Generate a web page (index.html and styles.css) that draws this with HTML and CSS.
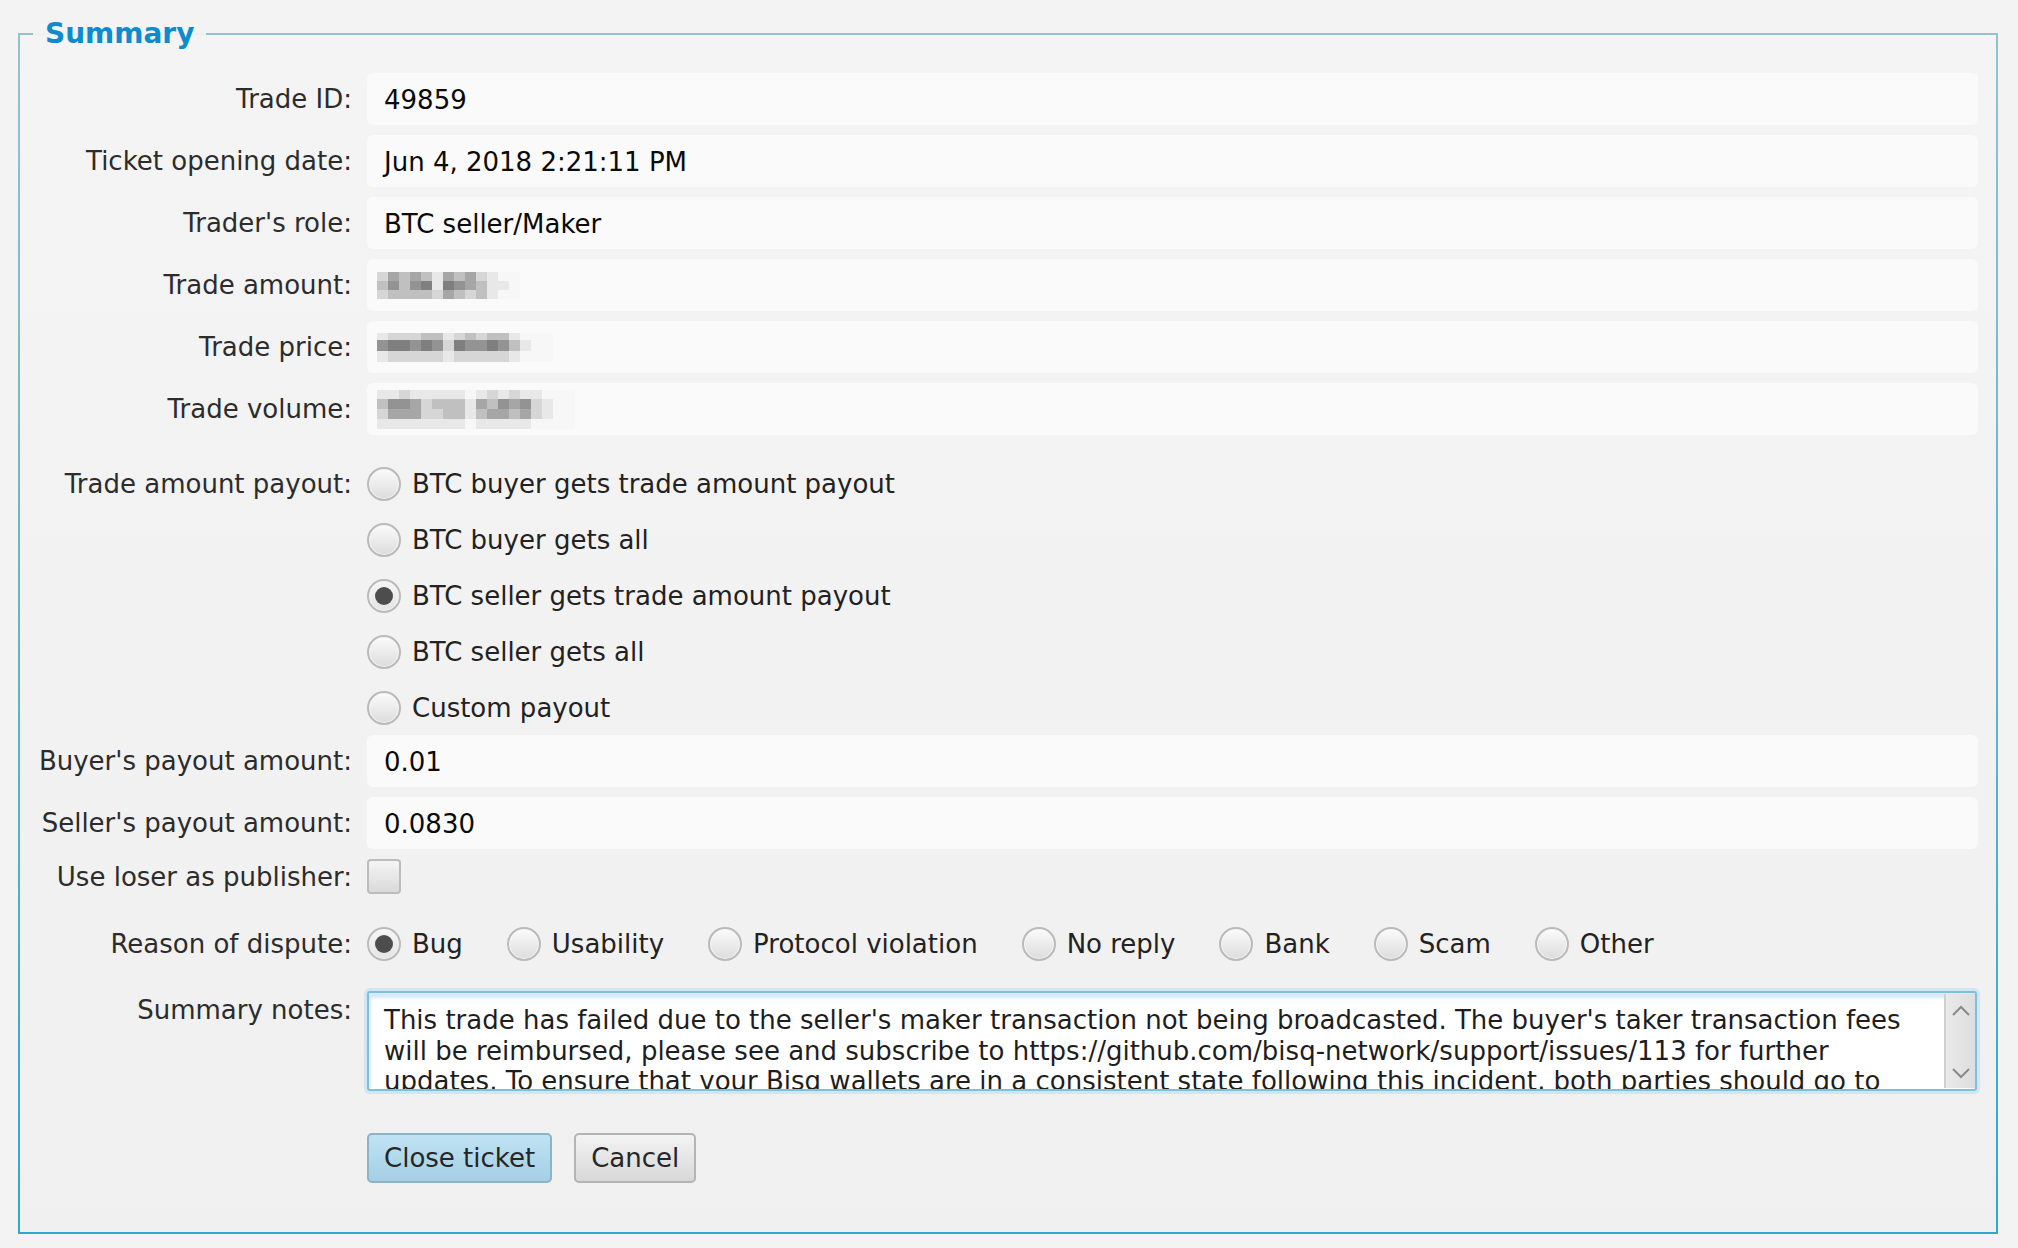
FILE: index.html
```html
<!DOCTYPE html>
<html lang="en">
<head>
<meta charset="utf-8">
<title>Summary</title>
<link rel="stylesheet" href="styles.css">
</head>
<body>
<div class="wrap">
  <fieldset class="summary">
    <legend>Summary</legend>
    <div class="form">
      <div class="row">
        <div class="lbl">Trade ID:</div>
        <div class="field">49859</div>
      </div>
      <div class="row">
        <div class="lbl">Ticket opening date:</div>
        <div class="field">Jun 4, 2018 2:21:11 PM</div>
      </div>
      <div class="row">
        <div class="lbl">Trader's role:</div>
        <div class="field">BTC seller/Maker</div>
      </div>
      <div class="row">
        <div class="lbl">Trade amount:</div>
        <div class="field blurred">
          <div class="mosaic cols13">
            <i class="g2"></i><i class="g4"></i><i class="g3"></i><i class="g4"></i><i class="g3"></i><i class="g1"></i><i class="g4"></i><i class="g3"></i><i class="g4"></i><i class="g2"></i><i class="g1"></i><i class="g0"></i><i class="g0"></i>
            <i class="g3"></i><i class="g5"></i><i class="g3"></i><i class="g5"></i><i class="g6"></i><i class="g1"></i><i class="g6"></i><i class="g5"></i><i class="g4"></i><i class="g3"></i><i class="g1"></i><i class="g1"></i><i class="g0"></i>
            <i class="g2"></i><i class="g3"></i><i class="g3"></i><i class="g3"></i><i class="g3"></i><i class="g2"></i><i class="g4"></i><i class="g3"></i><i class="g2"></i><i class="g3"></i><i class="g1"></i><i class="g0"></i><i class="g0"></i>
          </div>
        </div>
      </div>
      <div class="row">
        <div class="lbl">Trade price:</div>
        <div class="field blurred">
          <div class="mosaic cols16">
            <i class="g1"></i><i class="g2"></i><i class="g2"></i><i class="g2"></i><i class="g3"></i><i class="g3"></i><i class="g1"></i><i class="g2"></i><i class="g3"></i><i class="g2"></i><i class="g3"></i><i class="g3"></i><i class="g1"></i><i class="g0"></i><i class="g0"></i><i class="g0"></i>
            <i class="g5"></i><i class="g6"></i><i class="g6"></i><i class="g5"></i><i class="g6"></i><i class="g5"></i><i class="g2"></i><i class="g6"></i><i class="g5"></i><i class="g5"></i><i class="g6"></i><i class="g5"></i><i class="g3"></i><i class="g1"></i><i class="g0"></i><i class="g0"></i>
            <i class="g1"></i><i class="g2"></i><i class="g2"></i><i class="g2"></i><i class="g2"></i><i class="g2"></i><i class="g1"></i><i class="g2"></i><i class="g2"></i><i class="g2"></i><i class="g2"></i><i class="g2"></i><i class="g1"></i><i class="g0"></i><i class="g0"></i><i class="g0"></i>
          </div>
        </div>
      </div>
      <div class="row">
        <div class="lbl">Trade volume:</div>
        <div class="field blurred">
          <div class="mosaic cols18 rows4">
            <i class="g1"></i><i class="g1"></i><i class="g2"></i><i class="g1"></i><i class="g1"></i><i class="g1"></i><i class="g1"></i><i class="g1"></i><i class="g0"></i><i class="g1"></i><i class="g2"></i><i class="g1"></i><i class="g2"></i><i class="g1"></i><i class="g1"></i><i class="g0"></i><i class="g0"></i><i class="g0"></i>
            <i class="g3"></i><i class="g5"></i><i class="g5"></i><i class="g4"></i><i class="g2"></i><i class="g3"></i><i class="g3"></i><i class="g3"></i><i class="g1"></i><i class="g4"></i><i class="g3"></i><i class="g5"></i><i class="g4"></i><i class="g5"></i><i class="g2"></i><i class="g1"></i><i class="g0"></i><i class="g0"></i>
            <i class="g2"></i><i class="g4"></i><i class="g4"></i><i class="g4"></i><i class="g2"></i><i class="g2"></i><i class="g3"></i><i class="g3"></i><i class="g1"></i><i class="g3"></i><i class="g4"></i><i class="g4"></i><i class="g3"></i><i class="g4"></i><i class="g2"></i><i class="g1"></i><i class="g0"></i><i class="g0"></i>
            <i class="g1"></i><i class="g1"></i><i class="g1"></i><i class="g1"></i><i class="g1"></i><i class="g1"></i><i class="g1"></i><i class="g1"></i><i class="g0"></i><i class="g1"></i><i class="g1"></i><i class="g1"></i><i class="g1"></i><i class="g1"></i><i class="g0"></i><i class="g0"></i><i class="g0"></i><i class="g0"></i>
          </div>
        </div>
      </div>

      <div class="row top payout">
        <div class="lbl">Trade amount payout:</div>
        <div class="radios">
          <div class="opt"><span class="radio"></span><span>BTC buyer gets trade amount payout</span></div>
          <div class="opt"><span class="radio"></span><span>BTC buyer gets all</span></div>
          <div class="opt"><span class="radio on"><span class="dot"></span></span><span>BTC seller gets trade amount payout</span></div>
          <div class="opt"><span class="radio"></span><span>BTC seller gets all</span></div>
          <div class="opt"><span class="radio"></span><span>Custom payout</span></div>
        </div>
      </div>

      <div class="row buyer">
        <div class="lbl">Buyer's payout amount:</div>
        <div class="field">0.01</div>
      </div>
      <div class="row">
        <div class="lbl">Seller's payout amount:</div>
        <div class="field">0.0830</div>
      </div>
      <div class="row">
        <div class="lbl">Use loser as publisher:</div>
        <span class="checkbox"></span>
      </div>

      <div class="row reason">
        <div class="lbl">Reason of dispute:</div>
        <div class="inline-radios">
          <div class="opt"><span class="radio on"><span class="dot"></span></span><span>Bug</span></div>
          <div class="opt"><span class="radio"></span><span>Usability</span></div>
          <div class="opt"><span class="radio"></span><span>Protocol violation</span></div>
          <div class="opt"><span class="radio"></span><span>No reply</span></div>
          <div class="opt"><span class="radio"></span><span>Bank</span></div>
          <div class="opt"><span class="radio"></span><span>Scam</span></div>
          <div class="opt"><span class="radio"></span><span>Other</span></div>
        </div>
      </div>

      <div class="row top notes-row">
        <div class="lbl notes-lbl">Summary notes:</div>
        <div class="notes">
          <div class="notes-text">
            <div class="line">This trade has failed due to the seller's maker transaction not being broadcasted. The buyer's taker transaction fees</div>
            <div class="line">will be reimbursed, please see and subscribe to https://github.com/bisq-network/support/issues/113 for further</div>
            <div class="line">updates. To ensure that your Bisq wallets are in a consistent state following this incident, both parties should go to</div>
          </div>
          <div class="scrollbar">
            <svg class="arrow" width="20" height="12" viewBox="0 0 20 12"><polyline points="2,10 10,2 18,10" fill="none" stroke="#8a8a8a" stroke-width="2"/></svg>
            <svg class="arrow" width="20" height="12" viewBox="0 0 20 12"><polyline points="2,2 10,10 18,2" fill="none" stroke="#8a8a8a" stroke-width="2"/></svg>
          </div>
        </div>
      </div>

      <div class="row buttons-row">
        <div class="lbl"></div>
        <div class="buttons">
          <button class="btn primary">Close ticket</button>
          <button class="btn">Cancel</button>
        </div>
      </div>
    </div>
  </fieldset>
</div>
</body>
</html>
```
FILE: styles.css
```css
html, body {
  margin: 0;
  padding: 0;
}
body {
  background: #f3f3f3;
  font-family: "DejaVu Sans", "Verdana", sans-serif;
  font-size: 26px;
  color: #2a2a2a;
  width: 2018px;
  height: 1248px;
  overflow: hidden;
}
.wrap {
  padding: 18px 20px 0 18px;
}
.summary {
  margin: 0;
  padding: 23px 18px 49px 0;
  border: 2px solid #6ab4d0;
  border-image: linear-gradient(#96c1cd, #2fa8c9) 1;
  border-radius: 4px;
  background: linear-gradient(#f4f4f4, #f0f0f0);
  min-width: 0;
}
.summary legend {
  margin-left: 13px;
  padding: 0 12px;
  font-weight: bold;
  font-size: 28px;
  line-height: 32px;
  color: #0d8bcf;
}
.form {
  display: flex;
  flex-direction: column;
  gap: 10px;
}
.row {
  display: flex;
  align-items: center;
  gap: 15px;
}
.row.top {
  align-items: flex-start;
}
.lbl {
  width: 332px;
  flex-shrink: 0;
  text-align: right;
  line-height: 34px;
  color: #2c2c2c;
}
.field {
  flex: 1;
  height: 52px;
  box-sizing: border-box;
  background: #fafafa;
  border-radius: 6px;
  display: flex;
  align-items: center;
  padding-left: 17px;
  padding-top: 2px;
  color: #0a0a0a;
}
.field.blurred {
  padding-left: 10px;
  padding-top: 0;
}
.mosaic {
  display: grid;
  grid-template-rows: repeat(3, 9px);
}
.mosaic.rows4 {
  grid-template-rows: repeat(4, 9.75px);
}
.cols13 { grid-template-columns: repeat(13, 11px); }
.cols16 { grid-template-columns: repeat(16, 11px); grid-template-rows: 7px 11px 11px; }
.cols18 { grid-template-columns: repeat(18, 11px); }
.mosaic i { display: block; }
.g0 { background: #f7f7f7; }
.g1 { background: #e8e8e8; }
.g2 { background: #d6d6d6; }
.g3 { background: #c0c0c0; }
.g4 { background: #a6a6a6; }
.g5 { background: #939393; }
.g6 { background: #7f7f7f; }

.payout { margin-top: 22px; }
.buyer { margin-top: 0; }
.reason { margin-top: 23px; }
.notes-row { margin-top: 20px; }
.buttons-row { margin-top: 32px; }

.radios {
  display: flex;
  flex-direction: column;
  gap: 22px;
}
.opt {
  display: flex;
  align-items: center;
  gap: 11px;
  line-height: 34px;
  color: #222;
}
.inline-radios {
  display: flex;
  align-items: center;
  gap: 44px;
}
.radio {
  width: 34px;
  height: 34px;
  box-sizing: border-box;
  border-radius: 50%;
  border: 2px solid #bababa;
  background: linear-gradient(#fbfbfb, #dcdcdc);
  box-shadow: inset 0 0 0 1px #f6f6f6;
  display: flex;
  align-items: center;
  justify-content: center;
  flex-shrink: 0;
}
.radio.on {
  background: linear-gradient(#f6f6f6, #e4e4e4);
}
.dot {
  width: 18px;
  height: 18px;
  border-radius: 50%;
  background: #4d4d4d;
}
.checkbox {
  width: 34px;
  height: 35px;
  box-sizing: border-box;
  border-radius: 4px;
  border: 2px solid #bcbcbc;
  background: linear-gradient(#f5f5f5, #dadada);
}

.notes-lbl {
  padding-top: 2px;
}
.notes {
  flex: 1;
  height: 100px;
  box-sizing: border-box;
  border: 2px solid #80bfda;
  border-radius: 3px;
  background: #fff;
  box-shadow: 0 0 0 3px #cfe7f2, inset 3px 6px 3px -1px #d6ebf5;
  display: flex;
  overflow: hidden;
  margin-right: 1px;
}
.notes-text {
  flex: 1;
  padding: 12px 0 0 15px;
  line-height: 30.5px;
  color: #1e1e1e;
  overflow: hidden;
}
.line {
  white-space: nowrap;
}
.scrollbar {
  width: 31px;
  flex-shrink: 0;
  margin: 1px 0;
  background: linear-gradient(90deg, #e9e9e9, #dedede);
  border-left: 2px solid #d0d0d0;
  display: flex;
  flex-direction: column;
  align-items: center;
  justify-content: space-between;
  padding: 11px 0 9px;
  box-sizing: border-box;
}
.arrow {
  display: block;
}

.buttons {
  display: flex;
  gap: 22px;
}
.btn {
  font-family: "DejaVu Sans", "Verdana", sans-serif;
  font-size: 26px;
  height: 50px;
  padding: 0 15px;
  border: 2px solid #b4b4b4;
  border-radius: 5px;
  background: linear-gradient(#f3f3f3, #d8d8d8);
  color: #262626;
  line-height: 46px;
}
.btn.primary {
  border-color: #8db3c7;
  background: linear-gradient(#bfe3f4, #a4cfe4);
}
```
